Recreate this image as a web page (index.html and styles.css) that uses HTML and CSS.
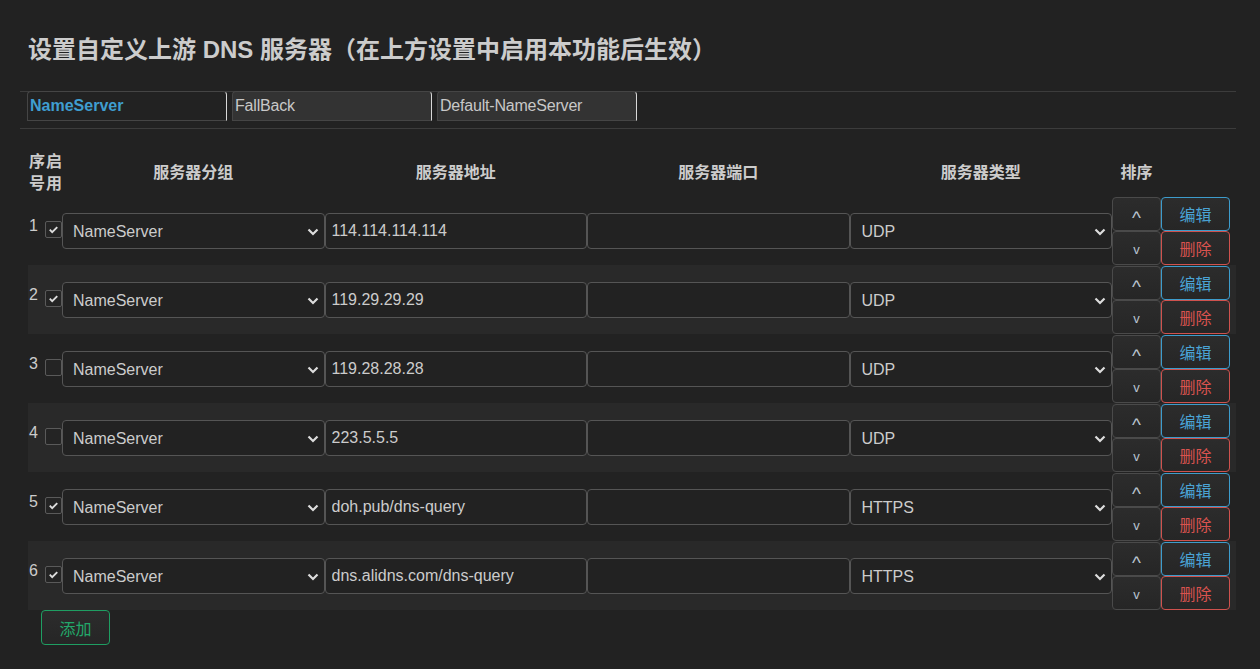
FILE: index.html
```html
<!DOCTYPE html>
<html lang="zh-CN">
<head>
<meta charset="utf-8">
<title>DNS</title>
<link rel="stylesheet" href="styles.css">
</head>
<body>
<div class="page">
  <h2 class="title">设置自定义上游 DNS 服务器（在上方设置中启用本功能后生效）</h2>
  <div class="tabbar">
    <div class="tab active">NameServer</div>
    <div class="tab">FallBack</div>
    <div class="tab">Default-NameServer</div>
  </div>
  <table class="grid">
    <colgroup>
      <col class="c-num"><col class="c-en"><col class="c-w"><col class="c-w"><col class="c-w"><col class="c-w"><col class="c-sort"><col class="c-act">
    </colgroup>
    <thead>
      <tr>
        <th class="th-left">序号</th>
        <th class="th-left">启用</th>
        <th>服务器分组</th>
        <th>服务器地址</th>
        <th>服务器端口</th>
        <th>服务器类型</th>
        <th>排序</th>
        <th></th>
      </tr>
    </thead>
    <tbody>
      <tr>
        <td class="num">1</td>
        <td><span class="cb on"><svg viewBox="0 0 16 16" width="16" height="16"><path d="M4 8.2l2.6 2.6L12 5.4" fill="none" stroke="#ddd" stroke-width="2"/></svg></span></td>
        <td><div class="sel"><select><option>NameServer</option></select><svg class="chev" viewBox="0 0 12 8" width="12" height="8"><path d="M1.5 1.5L6 6l4.5-4.5" fill="none" stroke="#ddd" stroke-width="2.2"/></svg></div></td>
        <td><input class="txt" type="text" value="114.114.114.114"></td>
        <td><input class="txt" type="text" value=""></td>
        <td><div class="sel"><select class="pad12"><option>UDP</option></select><svg class="chev" viewBox="0 0 12 8" width="12" height="8"><path d="M1.5 1.5L6 6l4.5-4.5" fill="none" stroke="#ddd" stroke-width="2.2"/></svg></div></td>
        <td><div class="stack"><button class="btn mv up">^</button><button class="btn mv down">v</button></div></td>
        <td><div class="stack"><button class="btn act edit">编辑</button><button class="btn act del">删除</button></div></td>
      </tr>
      <tr>
        <td class="num">2</td>
        <td><span class="cb on"><svg viewBox="0 0 16 16" width="16" height="16"><path d="M4 8.2l2.6 2.6L12 5.4" fill="none" stroke="#ddd" stroke-width="2"/></svg></span></td>
        <td><div class="sel"><select><option>NameServer</option></select><svg class="chev" viewBox="0 0 12 8" width="12" height="8"><path d="M1.5 1.5L6 6l4.5-4.5" fill="none" stroke="#ddd" stroke-width="2.2"/></svg></div></td>
        <td><input class="txt" type="text" value="119.29.29.29"></td>
        <td><input class="txt" type="text" value=""></td>
        <td><div class="sel"><select class="pad12"><option>UDP</option></select><svg class="chev" viewBox="0 0 12 8" width="12" height="8"><path d="M1.5 1.5L6 6l4.5-4.5" fill="none" stroke="#ddd" stroke-width="2.2"/></svg></div></td>
        <td><div class="stack"><button class="btn mv up">^</button><button class="btn mv down">v</button></div></td>
        <td><div class="stack"><button class="btn act edit">编辑</button><button class="btn act del">删除</button></div></td>
      </tr>
      <tr>
        <td class="num">3</td>
        <td><span class="cb"></span></td>
        <td><div class="sel"><select><option>NameServer</option></select><svg class="chev" viewBox="0 0 12 8" width="12" height="8"><path d="M1.5 1.5L6 6l4.5-4.5" fill="none" stroke="#ddd" stroke-width="2.2"/></svg></div></td>
        <td><input class="txt" type="text" value="119.28.28.28"></td>
        <td><input class="txt" type="text" value=""></td>
        <td><div class="sel"><select class="pad12"><option>UDP</option></select><svg class="chev" viewBox="0 0 12 8" width="12" height="8"><path d="M1.5 1.5L6 6l4.5-4.5" fill="none" stroke="#ddd" stroke-width="2.2"/></svg></div></td>
        <td><div class="stack"><button class="btn mv up">^</button><button class="btn mv down">v</button></div></td>
        <td><div class="stack"><button class="btn act edit">编辑</button><button class="btn act del">删除</button></div></td>
      </tr>
      <tr>
        <td class="num">4</td>
        <td><span class="cb"></span></td>
        <td><div class="sel"><select><option>NameServer</option></select><svg class="chev" viewBox="0 0 12 8" width="12" height="8"><path d="M1.5 1.5L6 6l4.5-4.5" fill="none" stroke="#ddd" stroke-width="2.2"/></svg></div></td>
        <td><input class="txt" type="text" value="223.5.5.5"></td>
        <td><input class="txt" type="text" value=""></td>
        <td><div class="sel"><select class="pad12"><option>UDP</option></select><svg class="chev" viewBox="0 0 12 8" width="12" height="8"><path d="M1.5 1.5L6 6l4.5-4.5" fill="none" stroke="#ddd" stroke-width="2.2"/></svg></div></td>
        <td><div class="stack"><button class="btn mv up">^</button><button class="btn mv down">v</button></div></td>
        <td><div class="stack"><button class="btn act edit">编辑</button><button class="btn act del">删除</button></div></td>
      </tr>
      <tr>
        <td class="num">5</td>
        <td><span class="cb on"><svg viewBox="0 0 16 16" width="16" height="16"><path d="M4 8.2l2.6 2.6L12 5.4" fill="none" stroke="#ddd" stroke-width="2"/></svg></span></td>
        <td><div class="sel"><select><option>NameServer</option></select><svg class="chev" viewBox="0 0 12 8" width="12" height="8"><path d="M1.5 1.5L6 6l4.5-4.5" fill="none" stroke="#ddd" stroke-width="2.2"/></svg></div></td>
        <td><input class="txt" type="text" value="doh.pub/dns-query"></td>
        <td><input class="txt" type="text" value=""></td>
        <td><div class="sel"><select class="pad12"><option>HTTPS</option></select><svg class="chev" viewBox="0 0 12 8" width="12" height="8"><path d="M1.5 1.5L6 6l4.5-4.5" fill="none" stroke="#ddd" stroke-width="2.2"/></svg></div></td>
        <td><div class="stack"><button class="btn mv up">^</button><button class="btn mv down">v</button></div></td>
        <td><div class="stack"><button class="btn act edit">编辑</button><button class="btn act del">删除</button></div></td>
      </tr>
      <tr>
        <td class="num">6</td>
        <td><span class="cb on"><svg viewBox="0 0 16 16" width="16" height="16"><path d="M4 8.2l2.6 2.6L12 5.4" fill="none" stroke="#ddd" stroke-width="2"/></svg></span></td>
        <td><div class="sel"><select><option>NameServer</option></select><svg class="chev" viewBox="0 0 12 8" width="12" height="8"><path d="M1.5 1.5L6 6l4.5-4.5" fill="none" stroke="#ddd" stroke-width="2.2"/></svg></div></td>
        <td><input class="txt" type="text" value="dns.alidns.com/dns-query"></td>
        <td><input class="txt" type="text" value=""></td>
        <td><div class="sel"><select class="pad12"><option>HTTPS</option></select><svg class="chev" viewBox="0 0 12 8" width="12" height="8"><path d="M1.5 1.5L6 6l4.5-4.5" fill="none" stroke="#ddd" stroke-width="2.2"/></svg></div></td>
        <td><div class="stack"><button class="btn mv up">^</button><button class="btn mv down">v</button></div></td>
        <td><div class="stack"><button class="btn act edit">编辑</button><button class="btn act del">删除</button></div></td>
      </tr>
    </tbody>
  </table>
  <div class="footer">
    <button class="btn add">添加</button>
  </div>
</div>
</body>
</html>
```

FILE: styles.css
```css
* { box-sizing: border-box; }
html, body {
  margin: 0;
  padding: 0;
  background: #222222;
  color: #cccccc;
  font-family: "Liberation Sans", "Noto Sans CJK SC", sans-serif;
  font-size: 16px;
}
.page {
  padding-left: 20px;
  width: 1236px;
}
.title {
  margin: 0;
  padding: 35px 0 0 8px;
  height: 91px;
  line-height: 30px;
  font-size: 24px;
  font-weight: bold;
  color: #cccccc;
  font-family: "Liberation Sans", "Noto Sans CJK SC", sans-serif;
}
.tabbar {
  display: flex;
  gap: 5px;
  border-top: 1px solid #3c3c3c;
  border-bottom: 1px solid #3c3c3c;
  padding: 0 0 7px 7px;
  height: 38px;
}
.tab {
  width: 200px;
  height: 30px;
  padding: 4px 0 0 2px;
  border: 1px solid #454545;
  border-right: 1px solid #d8d8d8;
  border-radius: 4px 4px 0 0;
  margin-top: -1px;
  background: #333333;
  color: #c8c8c8;
  font-size: 16px;
  line-height: 20px;
  letter-spacing: -0.2px;
}
.tab.active {
  background: #222222;
  color: #3f9ed0;
  font-weight: bold;
  letter-spacing: 0;
}
.grid {
  margin: 21px 0 0 8px;
  width: 1208px;
  table-layout: fixed;
  border-collapse: collapse;
  border-spacing: 0;
}
.c-num { width: 17px; }
.c-en { width: 17px; }
.c-w { width: 262.5px; }
.c-sort { width: 49px; }
.c-act { width: 75px; }
.grid th {
  height: 46px;
  padding: 0;
  font-size: 16px;
  line-height: 22px;
  font-weight: bold;
  color: #cccccc;
  text-align: center;
  vertical-align: middle;
}
.grid th.th-left {
  text-align: left;
  padding-left: 1px;
}
.grid tbody tr {
  height: 69px;
}
.grid tbody tr:nth-child(even) {
  background: #292929;
}
.grid td {
  padding: 0;
  vertical-align: middle;
}
.grid td.num {
  padding: 0 0 10px 1px;
  font-size: 16px;
  color: #cccccc;
}
.cb {
  display: block;
  width: 17px;
  height: 17px;
  border: 1px solid #5a5a5a;
  border-radius: 2px;
  background: #242424;
  margin-bottom: 2px;
}
.cb svg { display: block; width: 15px; height: 15px; }
.sel {
  position: relative;
}
.sel select {
  display: block;
  width: 100%;
  height: 36px;
  appearance: none;
  -webkit-appearance: none;
  background: #222222;
  color: #cccccc;
  border: 1px solid #555555;
  border-radius: 4px;
  padding: 2px 0 0 10px;
  font-family: "Liberation Sans", "Noto Sans CJK SC", sans-serif;
  font-size: 16px;
  outline: none;
}
.sel select.pad12 { padding-left: 11px; }
.chev {
  position: absolute;
  right: 6px;
  top: 15px;
  pointer-events: none;
}
.txt {
  display: block;
  width: 100%;
  height: 36px;
  background: #222222;
  color: #cccccc;
  border: 1px solid #555555;
  border-radius: 4px;
  padding: 1px 0 0 6px;
  font-family: "Liberation Sans", "Noto Sans CJK SC", sans-serif;
  font-size: 16px;
  outline: none;
}
.stack {
  display: flex;
  flex-direction: column;
}
.btn {
  font-family: "Liberation Sans", "Noto Sans CJK SC", sans-serif;
  background: linear-gradient(#2c2c2c, #262626);
  border-radius: 4px;
  height: 34px;
  padding: 0;
  cursor: pointer;
}
.btn.mv {
  width: 49px;
  border: 1px solid #4a4a4a;
  color: #b9c4d0;
}
.btn.mv.up {
  font-size: 19px;
  line-height: 19px;
  padding-top: 7px;
}
.btn.mv.down {
  font-size: 13px;
  line-height: 13px;
  padding-top: 4px;
}
.btn.act {
  width: 69px;
  font-size: 16px;
}
.btn.edit {
  border: 1px solid #3d9ccc;
  color: #4aa3d4;
}
.btn.del {
  border: 1px solid #cf524e;
  color: #d9534f;
}
.footer {
  padding: 0 0 0 21px;
}
.btn.add {
  width: 69px;
  height: 35px;
  border: 1px solid #1f9e62;
  color: #23a86a;
  font-size: 16px;
}
```
